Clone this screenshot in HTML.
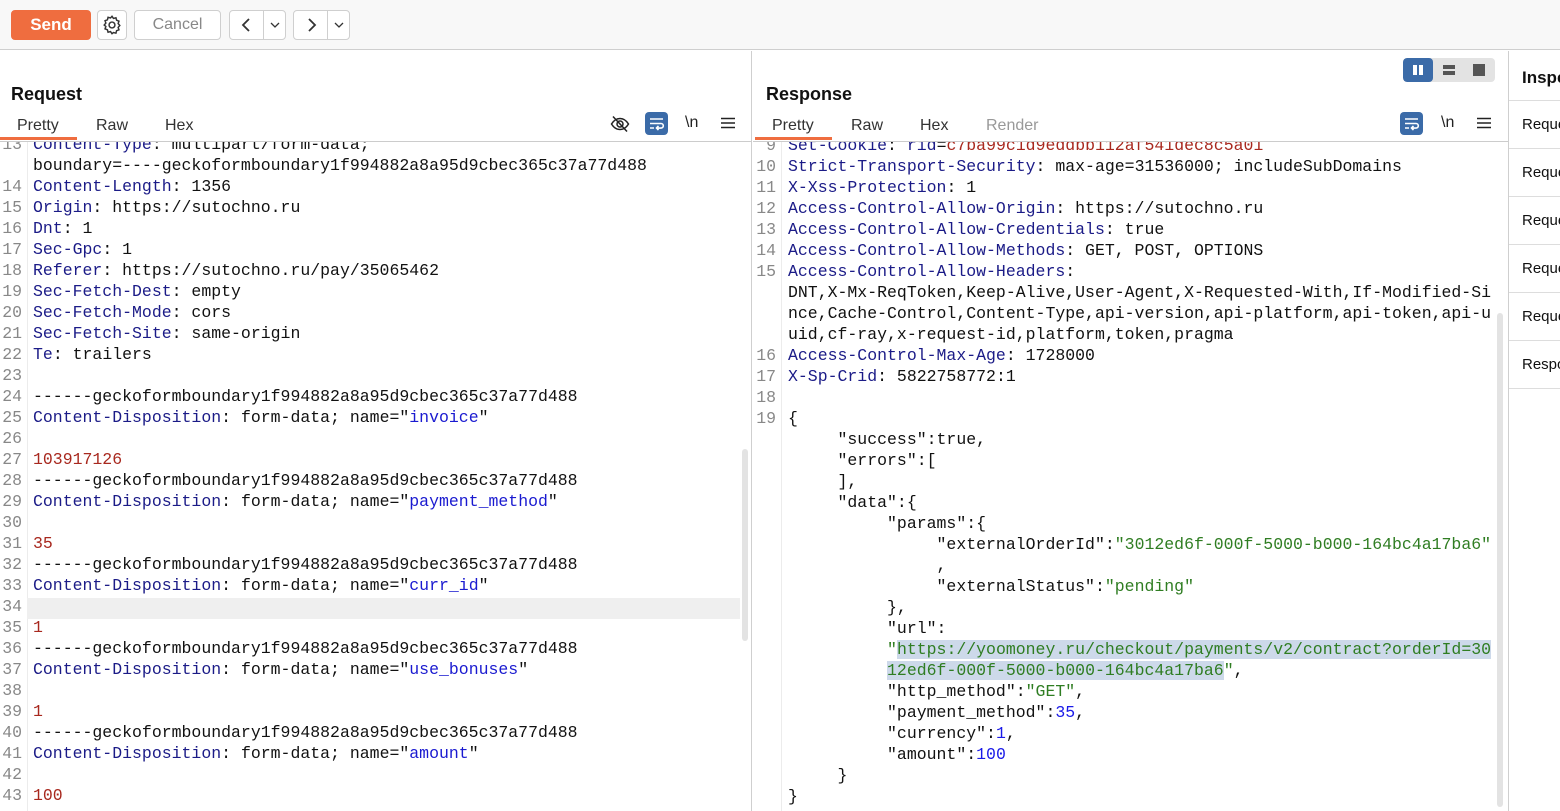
<!DOCTYPE html>
<html><head><meta charset="utf-8"><style>
*{box-sizing:border-box;margin:0;padding:0}
body{width:1560px;height:811px;overflow:hidden;background:#fff;font-family:"Liberation Sans",Arial,sans-serif;color:#111;position:relative}
.tb{position:absolute;left:0;top:0;width:1560px;height:50px;background:#f8f8f8;border-bottom:1px solid #cfcfcf}
.btn{position:absolute;top:10px;height:30px;border:1px solid #cfcfcf;border-radius:4px;background:#fff;display:flex;align-items:center;justify-content:center;font-size:16px;color:#888}
.send{background:#ef6d3f;border-color:#ef6d3f;color:#fff;font-weight:bold;font-size:17px}
.panel{position:absolute;top:51px;bottom:0}
h2{position:absolute;font-size:18px;font-weight:bold;top:33px}
.tabs{position:absolute;top:66px;font-size:16px;color:#333}
.tabs span{position:absolute;white-space:nowrap}
.ul{position:absolute;top:86px;height:3px;background:#ef6d3f}
.code{position:absolute;top:90px;bottom:0;border-top:1px solid #ccc;overflow:hidden}
pre{font-family:"Liberation Mono",monospace;font-size:16.5px;line-height:21px;white-space:pre;position:absolute}
.g{color:#888;text-align:right}
.k{color:#1b1b87}.r{color:#a8281e}.b{color:#1a1ad0}.s{color:#2f7d22}.n{color:#1a1ae8}
.hl{background:#cdd9ea}
.sb{position:absolute;background:#e3e3e3;border-radius:3px;width:6px}
.icon{position:absolute}
</style></head><body>
<div class="tb">
<div class="btn send" style="left:11px;width:80px">Send</div>
<div class="btn" style="left:97px;width:30px"><svg width="22" height="22" viewBox="0 0 24 24" fill="none" stroke="#333" stroke-width="1.6"><circle cx="12" cy="12" r="3.2"/><path d="M12 2.5l1.6 2.3 2.7-.7.7 2.7 2.6 1-.9 2.6 1.8 2.1-1.8 2.1.9 2.6-2.6 1-.7 2.7-2.7-.7L12 21.5l-1.6-2.3-2.7.7-.7-2.7-2.6-1 .9-2.6L3.5 12l1.8-2.1-.9-2.6 2.6-1 .7-2.7 2.7.7z"/></svg></div>
<div class="btn" style="left:134px;width:87px">Cancel</div>
<div class="btn" style="left:229px;width:57px;justify-content:flex-start"><svg style="margin-left:10px" width="12" height="16" viewBox="0 0 12 16"><path d="M9 2L3 8l6 6" fill="none" stroke="#333" stroke-width="1.8"/></svg><div style="position:absolute;left:33px;top:0;bottom:0;border-left:1px solid #cfcfcf"></div><svg style="position:absolute;left:40px;top:10px" width="10" height="8"><path d="M1 2l4 4 4-4" fill="none" stroke="#333" stroke-width="1.3"/></svg></div>
<div class="btn" style="left:293px;width:57px;justify-content:flex-start"><svg style="margin-left:12px" width="12" height="16" viewBox="0 0 12 16"><path d="M3 2l6 6-6 6" fill="none" stroke="#333" stroke-width="1.8"/></svg><div style="position:absolute;left:33px;top:0;bottom:0;border-left:1px solid #cfcfcf"></div><svg style="position:absolute;left:40px;top:10px" width="10" height="8"><path d="M1 2l4 4 4-4" fill="none" stroke="#333" stroke-width="1.3"/></svg></div>
</div>

<div class="panel" style="left:0;width:752px;border-right:1px solid #cfcfcf">
<h2 style="left:11px">Request</h2>
<div class="tabs"><span style="left:17px">Pretty</span><span style="left:96px">Raw</span><span style="left:165px">Hex</span></div>
<div class="ul" style="left:0;width:77px"></div>
<svg class="icon" style="left:610px;top:64px" width="20" height="18" viewBox="0 0 20 18" fill="none" stroke="#222" stroke-width="1.5"><path d="M1.5 9C4 5 7 3.5 10 3.5S16 5 18.5 9C16 13 13 14.5 10 14.5S4 13 1.5 9z"/><circle cx="10" cy="9" r="3"/><path d="M3 1.5l14 15"/></svg>
<div class="icon" style="left:645px;top:61px;width:23px;height:23px;background:#3b6ba8;border-radius:4px"><svg width="23" height="23" viewBox="0 0 23 23" fill="none" stroke="#fff" stroke-width="1.6"><path d="M5 7h13M5 11.5h11a2.3 2.3 0 010 4.6h-4M13.5 14l-2 2 2 2M5 16h4"/></svg></div>
<div class="icon" style="left:685px;top:63px;font-size:16px;color:#222">\n</div>
<svg class="icon" style="left:721px;top:66px" width="14" height="12"><path d="M0 1.5h14M0 6h14M0 10.5h14" stroke="#222" stroke-width="1.6"/></svg>
<div class="code" style="left:0;width:752px">
<div style="position:absolute;left:27px;top:0;bottom:0;border-left:1px solid #ececec"></div>
<div style="position:absolute;left:27px;top:456px;width:713px;height:21px;background:#efefef"></div>
<pre class="g" style="left:0;width:22px;top:-8px">13

14
15
16
17
18
19
20
21
22
23
24
25
26
27
28
29
30
31
32
33
34
35
36
37
38
39
40
41
42
43</pre>
<pre style="left:33px;top:-8px"><span class="k">Content-Type</span>: multipart/form-data;
boundary=----geckoformboundary1f994882a8a95d9cbec365c37a77d488
<span class="k">Content-Length</span>: 1356
<span class="k">Origin</span>: https://sutochno.ru
<span class="k">Dnt</span>: 1
<span class="k">Sec-Gpc</span>: 1
<span class="k">Referer</span>: https://sutochno.ru/pay/35065462
<span class="k">Sec-Fetch-Dest</span>: empty
<span class="k">Sec-Fetch-Mode</span>: cors
<span class="k">Sec-Fetch-Site</span>: same-origin
<span class="k">Te</span>: trailers

------geckoformboundary1f994882a8a95d9cbec365c37a77d488
<span class="k">Content-Disposition</span>: form-data; name="<span class="b">invoice</span>"

<span class="r">103917126</span>
------geckoformboundary1f994882a8a95d9cbec365c37a77d488
<span class="k">Content-Disposition</span>: form-data; name="<span class="b">payment_method</span>"

<span class="r">35</span>
------geckoformboundary1f994882a8a95d9cbec365c37a77d488
<span class="k">Content-Disposition</span>: form-data; name="<span class="b">curr_id</span>"

<span class="r">1</span>
------geckoformboundary1f994882a8a95d9cbec365c37a77d488
<span class="k">Content-Disposition</span>: form-data; name="<span class="b">use_bonuses</span>"

<span class="r">1</span>
------geckoformboundary1f994882a8a95d9cbec365c37a77d488
<span class="k">Content-Disposition</span>: form-data; name="<span class="b">amount</span>"

<span class="r">100</span></pre>
<div class="sb" style="left:742px;top:307px;height:192px"></div>
</div>
</div>

<div class="panel" style="left:753px;width:756px;border-right:1px solid #cfcfcf">
<div class="icon" style="left:650px;top:7px;width:92px;height:24px;background:#e3e3e3;border-radius:4px;overflow:hidden">
<div style="position:absolute;left:0;top:0;width:30px;height:24px;background:#3b6ba8;border-radius:4px"></div>
<div style="position:absolute;left:10px;top:7px;width:4px;height:10px;background:#fff"></div><div style="position:absolute;left:16px;top:7px;width:4px;height:10px;background:#fff"></div>
<div style="position:absolute;left:40px;top:7px;width:12px;height:4px;background:#555"></div><div style="position:absolute;left:40px;top:13px;width:12px;height:4px;background:#555"></div>
<div style="position:absolute;left:70px;top:6px;width:12px;height:12px;background:#555"></div>
</div>
<h2 style="left:13px">Response</h2>
<div class="tabs"><span style="left:19px">Pretty</span><span style="left:98px">Raw</span><span style="left:167px">Hex</span><span style="left:233px;color:#999">Render</span></div>
<div class="ul" style="left:2px;width:77px"></div>
<div class="icon" style="left:647px;top:61px;width:23px;height:23px;background:#3b6ba8;border-radius:4px"><svg width="23" height="23" viewBox="0 0 23 23" fill="none" stroke="#fff" stroke-width="1.6"><path d="M5 7h13M5 11.5h11a2.3 2.3 0 010 4.6h-4M13.5 14l-2 2 2 2M5 16h4"/></svg></div>
<div class="icon" style="left:688px;top:63px;font-size:16px;color:#222">\n</div>
<svg class="icon" style="left:724px;top:66px" width="14" height="12"><path d="M0 1.5h14M0 6h14M0 10.5h14" stroke="#222" stroke-width="1.6"/></svg>
<div class="code" style="left:0;width:755px">
<div style="position:absolute;left:28px;top:0;bottom:0;border-left:1px solid #ececec"></div>
<pre class="g" style="left:0;width:23px;top:-7px">9
10
11
12
13
14
15



16
17
18
19</pre>
<pre style="left:35px;top:-7px"><span class="k">Set-Cookie</span>: <span class="k">rid</span>=<span class="r">c7ba99c1d9eddbb112af541dec8c5a01</span>
<span class="k">Strict-Transport-Security</span>: max-age=31536000; includeSubDomains
<span class="k">X-Xss-Protection</span>: 1
<span class="k">Access-Control-Allow-Origin</span>: https://sutochno.ru
<span class="k">Access-Control-Allow-Credentials</span>: true
<span class="k">Access-Control-Allow-Methods</span>: GET, POST, OPTIONS
<span class="k">Access-Control-Allow-Headers</span>:
DNT,X-Mx-ReqToken,Keep-Alive,User-Agent,X-Requested-With,If-Modified-Si
nce,Cache-Control,Content-Type,api-version,api-platform,api-token,api-u
uid,cf-ray,x-request-id,platform,token,pragma
<span class="k">Access-Control-Max-Age</span>: 1728000
<span class="k">X-Sp-Crid</span>: 5822758772:1

{
     "success":true,
     "errors":[
     ],
     "data":{
          "params":{
               "externalOrderId":<span class="s">"3012ed6f-000f-5000-b000-164bc4a17ba6"</span>
               ,
               "externalStatus":<span class="s">"pending"</span>
          },
          "url":
          <span class="s">"<span class="hl">https://yoomoney.ru/checkout/payments/v2/contract?orderId=30</span></span>
<span class="s">          <span class="hl">12ed6f-000f-5000-b000-164bc4a17ba6</span>"</span>,
          "http_method":<span class="s">"GET"</span>,
          "payment_method":<span class="n">35</span>,
          "currency":<span class="n">1</span>,
          "amount":<span class="n">100</span>
     }
}</pre>
<div class="sb" style="left:744px;top:171px;height:494px"></div>
</div>
</div>

<div style="position:absolute;left:1509px;top:51px;right:0;bottom:0;overflow:hidden;font-size:15px">
<div style="position:absolute;left:13px;top:17px;font-size:17px;font-weight:bold">Inspector</div>
<div style="position:absolute;left:0;top:49px;width:60px;border-top:1px solid #ddd"></div>
<div style="position:absolute;left:13px;top:65px">Request</div>
<div style="position:absolute;left:0;top:97px;width:60px;border-top:1px solid #ddd"></div>
<div style="position:absolute;left:13px;top:113px">Request</div>
<div style="position:absolute;left:0;top:145px;width:60px;border-top:1px solid #ddd"></div>
<div style="position:absolute;left:13px;top:161px">Request</div>
<div style="position:absolute;left:0;top:193px;width:60px;border-top:1px solid #ddd"></div>
<div style="position:absolute;left:13px;top:209px">Request</div>
<div style="position:absolute;left:0;top:241px;width:60px;border-top:1px solid #ddd"></div>
<div style="position:absolute;left:13px;top:257px">Request</div>
<div style="position:absolute;left:0;top:289px;width:60px;border-top:1px solid #ddd"></div>
<div style="position:absolute;left:13px;top:305px">Response</div>
<div style="position:absolute;left:0;top:337px;width:60px;border-top:1px solid #ddd"></div>
</div>
</body></html>
